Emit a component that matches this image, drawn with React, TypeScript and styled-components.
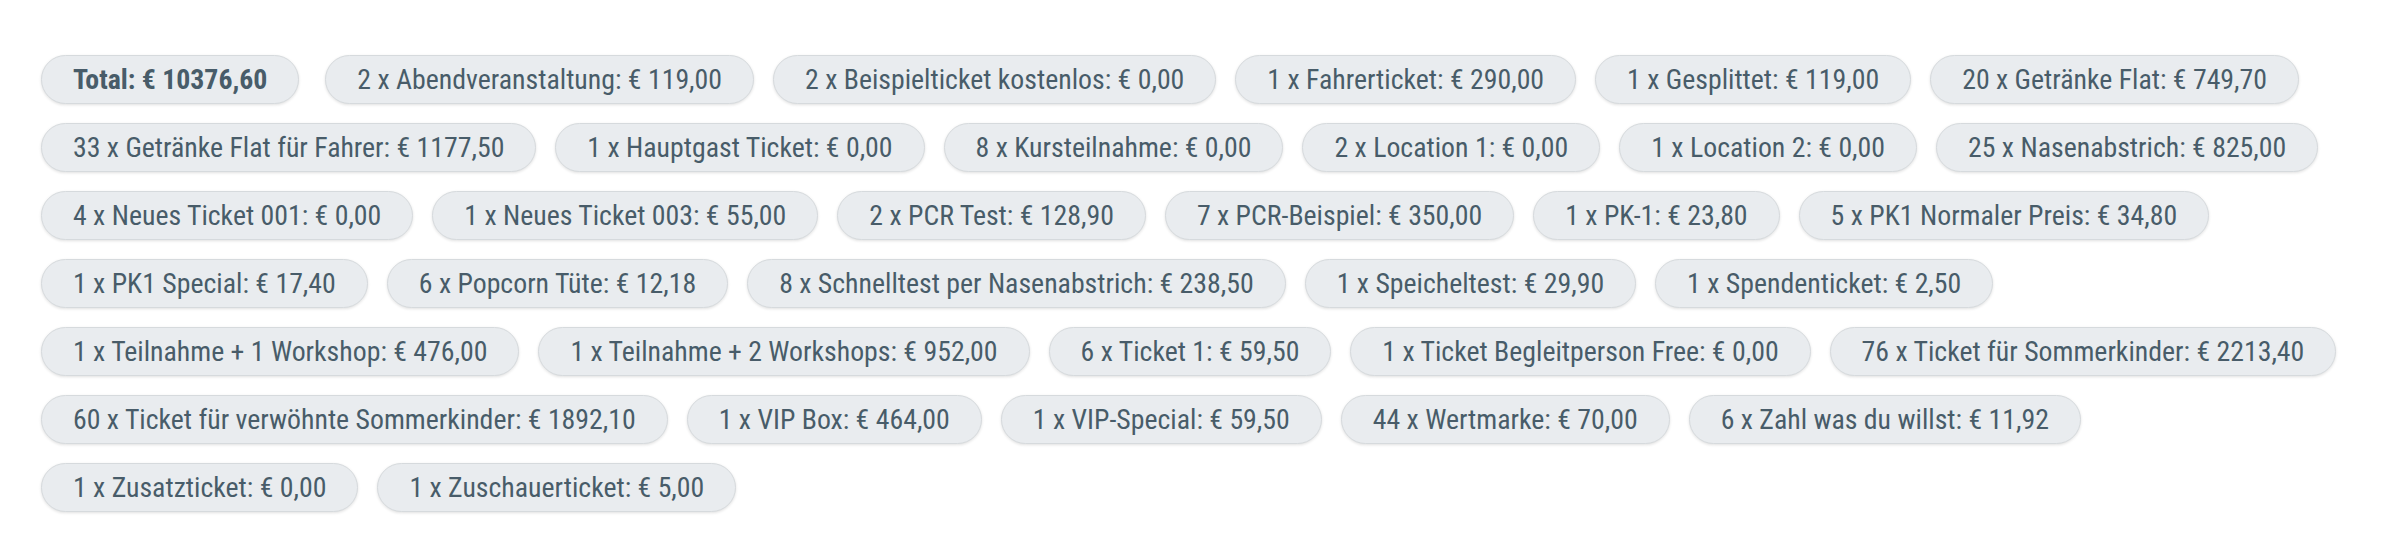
import styled, { createGlobalStyle } from 'styled-components';

const GlobalStyle = createGlobalStyle`
  html, body {
    margin: 0;
    padding: 0;
    background: #ffffff;
  }
`;

const List = styled.ul`
  display: flex;
  flex-wrap: wrap;
  align-items: flex-start;
  gap: 19px;
  margin: 0;
  padding: 55px 41px;
  list-style: none;
  font-family: 'Roboto Condensed', 'Liberation Sans Narrow', 'DejaVu Sans Condensed', sans-serif;
`;

const Chip = styled.li<{ $strong?: boolean }>`
  display: flex;
  align-items: center;
  height: 49px;
  box-sizing: border-box;
  padding: 0 31px;
  margin-right: ${(p) => (p.$strong ? '7px' : '0')};
  border: 1px solid #d6dadd;
  border-radius: 25px;
  background: #e9ecef;
  box-shadow: 0 1px 3px rgba(0, 0, 0, 0.12);
  color: #485c69;
  font-size: 27.8px;
  font-weight: ${(p) => (p.$strong ? 700 : 400)};
  white-space: nowrap;
`;

type Item = { count: number; name: string; total: string };

const items: Item[] = [
  { count: 2, name: 'Abendveranstaltung', total: '119,00' },
  { count: 2, name: 'Beispielticket kostenlos', total: '0,00' },
  { count: 1, name: 'Fahrerticket', total: '290,00' },
  { count: 1, name: 'Gesplittet', total: '119,00' },
  { count: 20, name: 'Getränke Flat', total: '749,70' },
  { count: 33, name: 'Getränke Flat für Fahrer', total: '1177,50' },
  { count: 1, name: 'Hauptgast Ticket', total: '0,00' },
  { count: 8, name: 'Kursteilnahme', total: '0,00' },
  { count: 2, name: 'Location 1', total: '0,00' },
  { count: 1, name: 'Location 2', total: '0,00' },
  { count: 25, name: 'Nasenabstrich', total: '825,00' },
  { count: 4, name: 'Neues Ticket 001', total: '0,00' },
  { count: 1, name: 'Neues Ticket 003', total: '55,00' },
  { count: 2, name: 'PCR Test', total: '128,90' },
  { count: 7, name: 'PCR-Beispiel', total: '350,00' },
  { count: 1, name: 'PK-1', total: '23,80' },
  { count: 5, name: 'PK1 Normaler Preis', total: '34,80' },
  { count: 1, name: 'PK1 Special', total: '17,40' },
  { count: 6, name: 'Popcorn Tüte', total: '12,18' },
  { count: 8, name: 'Schnelltest per Nasenabstrich', total: '238,50' },
  { count: 1, name: 'Speicheltest', total: '29,90' },
  { count: 1, name: 'Spendenticket', total: '2,50' },
  { count: 1, name: 'Teilnahme + 1 Workshop', total: '476,00' },
  { count: 1, name: 'Teilnahme + 2 Workshops', total: '952,00' },
  { count: 6, name: 'Ticket 1', total: '59,50' },
  { count: 1, name: 'Ticket Begleitperson Free', total: '0,00' },
  { count: 76, name: 'Ticket für Sommerkinder', total: '2213,40' },
  { count: 60, name: 'Ticket für verwöhnte Sommerkinder', total: '1892,10' },
  { count: 1, name: 'VIP Box', total: '464,00' },
  { count: 1, name: 'VIP-Special', total: '59,50' },
  { count: 44, name: 'Wertmarke', total: '70,00' },
  { count: 6, name: 'Zahl was du willst', total: '11,92' },
  { count: 1, name: 'Zusatzticket', total: '0,00' },
  { count: 1, name: 'Zuschauerticket', total: '5,00' },
];

export default function App(): JSX.Element {
  return (
    <>
      <GlobalStyle />
      <List>
        <Chip $strong>Total: € 10376,60</Chip>
        {items.map((item) => (
          <Chip key={item.name}>
            {item.count} x {item.name}: € {item.total}
          </Chip>
        ))}
      </List>
    </>
  );
}
